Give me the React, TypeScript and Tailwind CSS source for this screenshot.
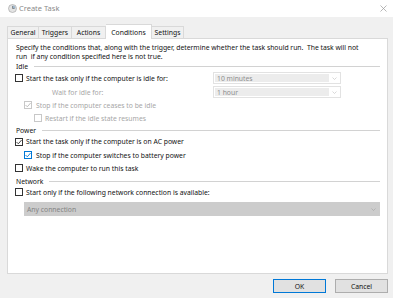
import React from "react";

type CbState = "off" | "on" | "onBlue" | "disOn" | "disOff";

function Checkbox({ state }: { state: CbState }) {
  const border =
    state === "off"
      ? "border-[#333333]"
      : state === "on"
      ? "border-[#333333]"
      : state === "onBlue"
      ? "border-[#0078d7]"
      : "border-[#c8c8c8]";
  const checkColor =
    state === "on" ? "#333333" : state === "onBlue" ? "#0078d7" : "#b8b8b8";
  const checked = state === "on" || state === "onBlue" || state === "disOn";
  return (
    <div className={`w-[8px] h-[8px] border bg-white shrink-0 flex items-center justify-center ${border}`}>
      {checked && (
        <svg width="6" height="6" viewBox="0 0 6 6">
          <polyline points="0.5,3 2.3,4.8 5.6,1" fill="none" stroke={checkColor} strokeWidth="0.9" />
        </svg>
      )}
    </div>
  );
}

function SectionHeader({ label }: { label: string }) {
  return (
    <div className="flex items-center pl-[8px] pr-[7px]">
      <span className="text-[#111111]">{label}</span>
      <div className="flex-1 ml-[6px] h-px bg-[#d2d2d2]" />
    </div>
  );
}

function Chevron({ color }: { color: string }) {
  return (
    <svg width="5" height="3" viewBox="0 0 5 3">
      <polyline points="0.5,0.5 2.5,2.5 4.5,0.5" fill="none" stroke={color} strokeWidth="0.7" />
    </svg>
  );
}

function SmallCombo({ text }: { text: string }) {
  return (
    <div className="w-[128px] h-[12px] border border-[#e2e2e2] bg-white flex items-stretch p-px">
      <div className="w-[114px] bg-[#ececec] flex items-center pl-[2px] text-[#8c8c8c]">{text}</div>
      <div className="flex-1 flex items-center justify-center">
        <Chevron color="#c8c8c8" />
      </div>
    </div>
  );
}

export default function App() {
  return (
    <div className="w-[393px] h-[298px] bg-[#f0f0f0] flex flex-col overflow-hidden font-['Noto_Sans',sans-serif] text-[6.8px] leading-[9px] text-[#111111]">
      {/* Title bar */}
      <div className="h-[17px] bg-white flex items-center pl-[8px] pr-[6px] shrink-0">
        <svg width="9" height="9" viewBox="0 0 9 9">
          <circle cx="4.5" cy="4.5" r="4" fill="#e4e4e4" stroke="#a8a8a8" strokeWidth="0.7" />
          <path d="M4.5 4.5 L4.5 1.5 A3 3 0 0 1 7.5 4.5 Z" fill="#9cb6cc" />
          <line x1="4.5" y1="4.5" x2="4.5" y2="2" stroke="#707070" strokeWidth="0.7" />
          <line x1="4.5" y1="4.5" x2="6.5" y2="4.5" stroke="#707070" strokeWidth="0.7" />
        </svg>
        <span className="ml-[2px] text-[7.5px] text-[#8a8a8a]">Create Task</span>
        <svg className="ml-auto" width="7" height="7" viewBox="0 0 7 7">
          <line x1="0.5" y1="0.5" x2="6.5" y2="6.5" stroke="#9a9a9a" strokeWidth="0.7" />
          <line x1="6.5" y1="0.5" x2="0.5" y2="6.5" stroke="#9a9a9a" strokeWidth="0.7" />
        </svg>
      </div>

      {/* Tabs */}
      <div className="mt-[7px] h-[14px] flex items-end pl-[7px] shrink-0">
        <div className="w-[32px] h-[12px] border border-b-0 border-[#d9d9d9] bg-[#f0f0f0] flex items-center justify-center">General</div>
        <div className="w-[33px] h-[12px] border border-b-0 border-l-0 border-[#d9d9d9] bg-[#f0f0f0] flex items-center justify-center">Triggers</div>
        <div className="w-[34px] h-[12px] border border-b-0 border-l-0 border-[#d9d9d9] bg-[#f0f0f0] flex items-center justify-center">Actions</div>
        <div className="w-[46px] h-[15px] -mb-px relative z-10 border border-b-0 border-l-0 border-[#d9d9d9] bg-white flex items-center justify-center">Conditions</div>
        <div className="w-[32px] h-[12px] border border-b-0 border-l-0 border-[#d9d9d9] bg-[#f0f0f0] flex items-center justify-center">Settings</div>
      </div>

      {/* Panel */}
      <div className="ml-[7px] w-[381px] h-[236px] bg-white border border-[#d9d9d9] flex flex-col shrink-0">
        <div className="pt-[4px] pl-[8px] whitespace-pre">
          <div>Specify the conditions that, along with the trigger, determine whether the task should run.  The task will not</div>
          <div>run  if any condition specified here is not true.</div>
        </div>
        <div className="h-[10px] flex flex-col justify-center">
          <SectionHeader label="Idle" />
        </div>
        <div className="h-[14px] flex items-center pl-[7px]">
          <div className="w-[198px] flex items-center gap-[3px]">
            <Checkbox state="off" />
            <span>Start the task only if the computer is idle for:</span>
          </div>
          <SmallCombo text="10 minutes" />
        </div>
        <div className="h-[14px] flex items-center pl-[44px]">
          <div className="w-[161px] text-[#a6a6a6]">Wait for idle for:</div>
          <SmallCombo text="1 hour" />
        </div>
        <div className="h-[12px] flex items-center pl-[16px] gap-[4px] text-[#a6a6a6]">
          <Checkbox state="disOn" />
          <span>Stop if the computer ceases to be idle</span>
        </div>
        <div className="h-[14px] flex items-center pl-[26px] gap-[3px] text-[#a6a6a6]">
          <Checkbox state="disOff" />
          <span>Restart if the idle state resumes</span>
        </div>
        <div className="h-[10px] flex flex-col justify-center">
          <SectionHeader label="Power" />
        </div>
        <div className="h-[13px] flex items-center pl-[7px] gap-[3px]">
          <Checkbox state="on" />
          <span>Start the task only if the computer is on AC power</span>
        </div>
        <div className="h-[14px] flex items-center pl-[16px] gap-[4px]">
          <Checkbox state="onBlue" />
          <span>Stop if the computer switches to battery power</span>
        </div>
        <div className="h-[12px] flex items-center pl-[7px] gap-[3px]">
          <Checkbox state="off" />
          <span>Wake the computer to run this task</span>
        </div>
        <div className="h-[14px] flex flex-col justify-center">
          <SectionHeader label="Network" />
        </div>
        <div className="h-[8px] flex items-center pl-[7px] gap-[3px]">
          <Checkbox state="off" />
          <span>Start only if the following network connection is available:</span>
        </div>
        <div className="mt-[6px] ml-[16px] w-[356px] h-[14px] bg-[#cccccc] border border-[#cccccc] flex items-center pl-[2px] pr-[3px] text-[#838383]">
          <span>Any connection</span>
          <div className="ml-auto">
            <Chevron color="#a8a8a8" />
          </div>
        </div>
      </div>

      {/* Buttons */}
      <div className="flex justify-end gap-[9px] pr-[5px] pt-[5px]">
        <div className="w-[53px] h-[14px] bg-[#e1e1e1] border border-[#0078d7] flex items-center justify-center">OK</div>
        <div className="w-[53px] h-[14px] bg-[#e1e1e1] border border-[#adadad] flex items-center justify-center">Cancel</div>
      </div>
    </div>
  );
}
